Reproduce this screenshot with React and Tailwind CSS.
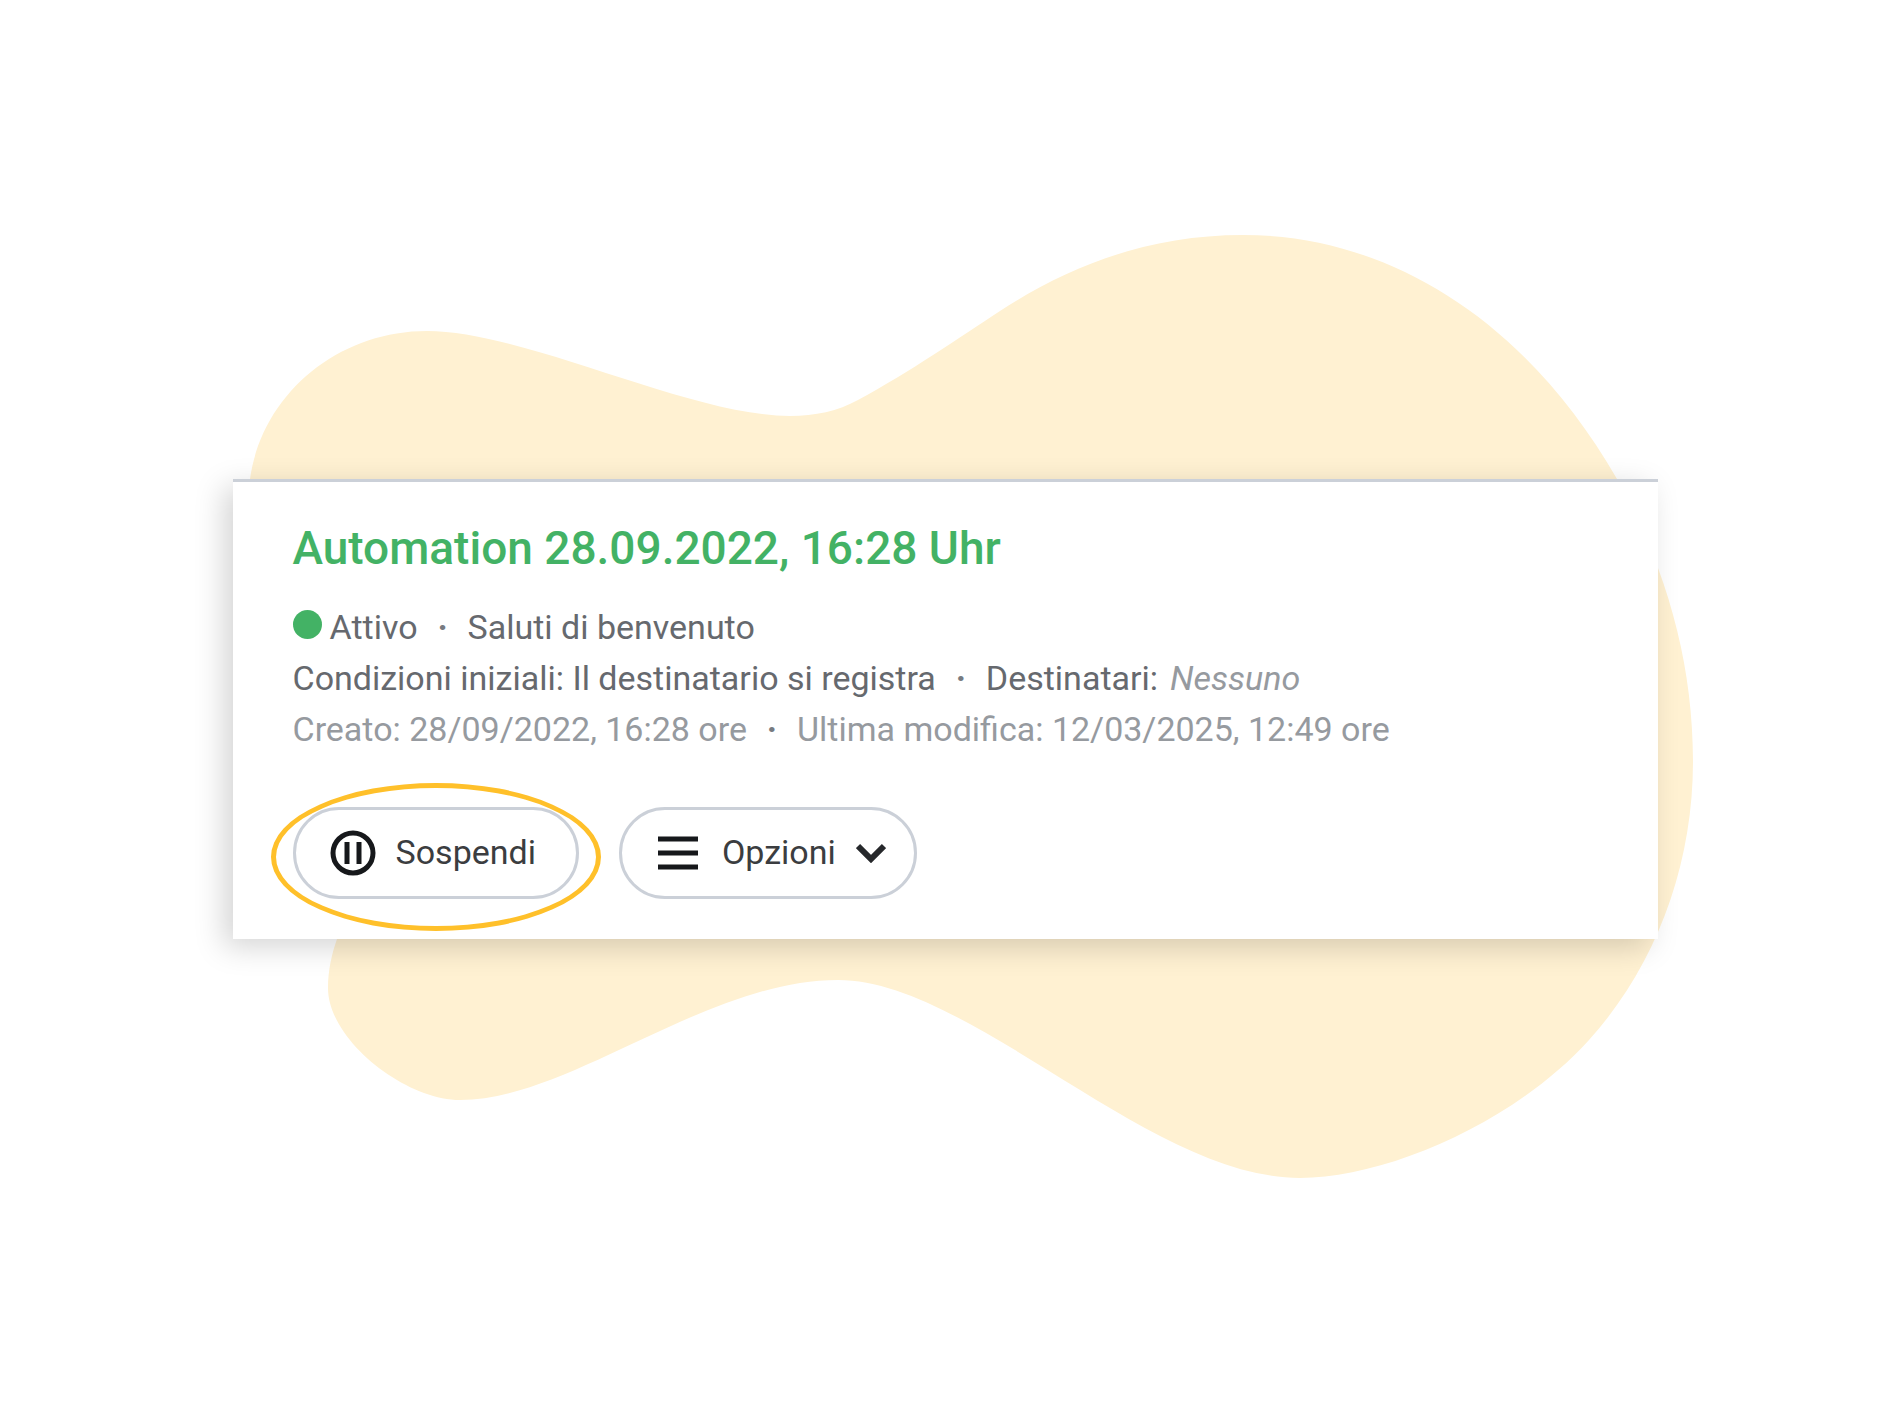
import React from 'react';

const Blob = () => (
    <svg
        className="absolute inset-0 w-full h-full pointer-events-none"
        viewBox="0 0 1890 1417"
        aria-hidden="true"
    >
        <path
            fill="#fff1d2"
            d="M250 479C262 394 338 331 427 331C525 331 690 416 790 416C815 416 838 411 858 400C910 372 960 337 1000 311C1070 265 1150 235 1243 235C1395 235 1530 327 1617 479C1665 565 1693 660 1693 761C1693 867 1655 967 1589 1040C1514 1123 1385 1178 1300 1178C1150 1178 970 980 838 980C705 980 570 1100 460 1100C405 1100 328 1040 328 988C328 970 332 953 337 939Z"
        />
    </svg>
);

const PauseIcon = () => (
    <svg width="46" height="46" viewBox="0 0 46 46" fill="none" stroke="#16181b" strokeWidth="5" aria-hidden="true">
        <circle cx="23" cy="23" r="20" />
        <path d="M17 12v22M29 12v22" />
    </svg>
);

const MenuIcon = () => (
    <svg width="40" height="36" viewBox="0 0 40 36" stroke="#16181b" strokeWidth="5" aria-hidden="true">
        <path d="M0 4h40M0 18h40M0 32h40" />
    </svg>
);

const ChevronIcon = () => (
    <svg width="30" height="20" viewBox="0 0 30 20" fill="none" stroke="#26282b" strokeWidth="6" aria-hidden="true">
        <path d="M2 3l13 13L28 3" />
    </svg>
);

const Dot = () => <span className="w-[50px] text-center font-bold text-[#777b81]">·</span>;

const buttonClass =
    'flex items-center h-[92px] rounded-full border-3 border-[#cbd0d8] bg-white text-[34px] text-[#3b3d40]';

const App = () => {
    return (
        <div
            className="relative min-h-screen flex items-center justify-center overflow-hidden bg-white px-8"
            style={{ fontFamily: 'Roboto, sans-serif' }}
        >
            <Blob />

            <article className="relative w-full max-w-[1425px] bg-white border-t-3 border-[#cbd0d8] px-15 pt-9 pb-10 shadow-[-9px_8px_28px_rgba(0,0,0,0.17)]">
                <h2 className="text-[46px] leading-[60px] font-medium text-[#43b265]">
                    Automation 28.09.2022, 16:28 Uhr
                </h2>

                <div className="mt-6 text-[34px] leading-[51px] text-[#66696e]">
                    <p className="flex flex-wrap items-baseline">
                        <span className="w-[29px] h-[29px] mr-2 rounded-full bg-[#43b265]" />
                        Attivo
                        <Dot />
                        Saluti di benvenuto
                    </p>
                    <p className="flex flex-wrap items-baseline">
                        Condizioni iniziali: Il destinatario si registra
                        <Dot />
                        Destinatari:
                        <em className="ml-3 text-[#969a9f]">Nessuno</em>
                    </p>
                    <p className="flex flex-wrap items-baseline text-[#969a9f]">
                        Creato: 28/09/2022, 16:28 ore
                        <Dot />
                        Ultima modifica: 12/03/2025, 12:49 ore
                    </p>
                </div>

                <div className="flex flex-wrap gap-10 mt-13">
                    <div className="relative">
                        <button type="button" className={`${buttonClass} gap-5 pl-[34px] pr-10`}>
                            <PauseIcon />
                            Sospendi
                        </button>
                        {/* Highlight ring */}
                        <span className="absolute -inset-x-[22px] -top-6 -bottom-8 rounded-[50%] border-5 border-[#ffc02a] pointer-events-none" />
                    </div>

                    <button type="button" aria-haspopup="menu" className={`${buttonClass} gap-5 pl-9 pr-7`}>
                        <MenuIcon />
                        <span className="pl-1">Opzioni</span>
                        <ChevronIcon />
                    </button>
                </div>
            </article>
        </div>
    );
};

export default App;
